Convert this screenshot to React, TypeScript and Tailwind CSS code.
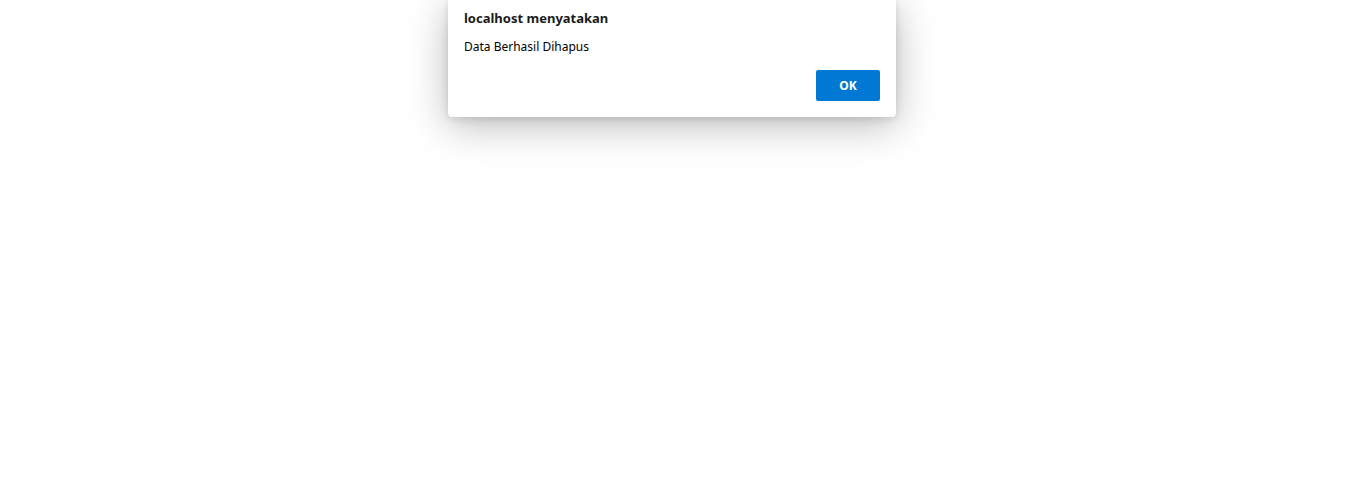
import React from 'react';

export default function App() {
  return (
    <div className="w-[1350px] h-[483px] bg-white relative overflow-hidden font-['Noto_Sans','Liberation_Sans',sans-serif]">
      {/* alert dialog */}
      <div className="absolute left-[448px] top-0 w-[448px] h-[117px] bg-white rounded-b-[4px] shadow-[0_8px_40px_rgba(0,0,0,0.28),0_2px_8px_rgba(0,0,0,0.12)] px-4 pt-[9px]">
        <h1 className="text-[13px] font-bold text-[#1b1b1b] leading-[18px]">localhost menyatakan</h1>
        <p className="text-[12px] text-black leading-[16px] mt-[12px]">Data Berhasil Dihapus</p>
        <div className="flex justify-end mt-[15px]">
          <button className="w-16 h-[31px] bg-[#0078d4] text-white text-[12px] font-bold rounded-[2px]">OK</button>
        </div>
      </div>
    </div>
  );
}
